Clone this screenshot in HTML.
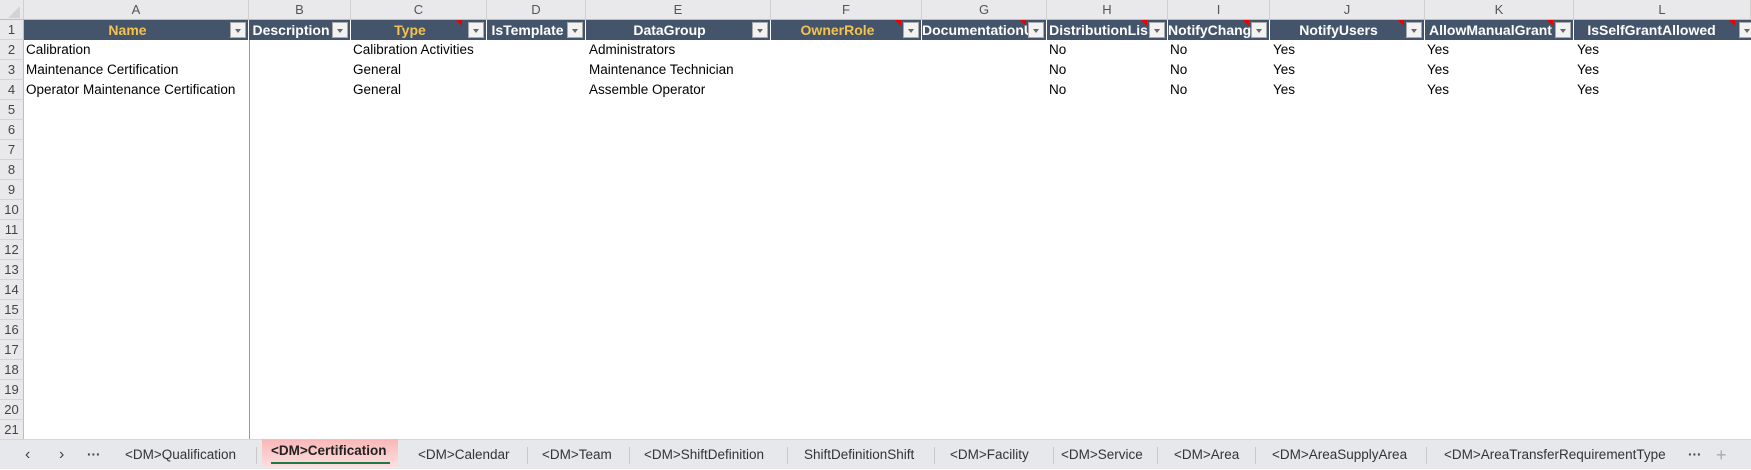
<!DOCTYPE html>
<html><head><meta charset="utf-8"><style>
*{margin:0;padding:0;box-sizing:border-box}
body{width:1751px;height:469px;overflow:hidden;background:#fff;font-family:"Liberation Sans",sans-serif;position:relative;font-size:13.5px;color:#000}
.a{position:absolute}
.ch{position:absolute;top:0;height:20px;background:#e9e9ec;border-right:1px solid #d0d0d0;border-bottom:1px solid #bdbdbd;text-align:center;line-height:20px;color:#555;font-size:13px}
.rh{position:absolute;left:0;width:24px;height:20px;background:#e9e9ec;border-bottom:1px solid #d4d4d4;border-right:1px solid #bdbdbd;text-align:center;line-height:20px;color:#444;font-size:13px}
.h{position:absolute;top:20px;height:20px;background:#44546a;border-right:1px solid #fff;color:#fff;font-weight:bold;line-height:20px;overflow:hidden;white-space:nowrap;font-size:14px}
.h span{display:block;text-align:center;padding-right:17px}
.y{color:#f5c24f}
.fb{position:absolute;right:2px;top:2px;width:16px;height:16px;background:#f2f2f2;border:1px solid #a9a9a9}
.fb:after{content:"";position:absolute;left:4px;top:6px;border-left:3.5px solid transparent;border-right:3.5px solid transparent;border-top:4px solid #666}
.rt{position:absolute;right:0;top:0;width:0;height:0;border-left:6px solid transparent;border-top:6px solid #e00}
.c{position:absolute;height:20px;line-height:20px;white-space:nowrap}
.tabs{position:absolute;left:0;top:439px;width:1751px;height:30px;background:#e6e8eb;border-top:1px solid #d6d6d6}
.t{position:absolute;top:0;height:30px;line-height:30px;color:#333;font-size:13.5px;white-space:nowrap}
.sep{position:absolute;top:7px;width:1px;height:17px;background:#c8c8c8}
</style></head><body>
<div class="ch" style="left:0;width:24px;background:#e9e9ec"></div>
<div class="a" style="left:8px;top:6px;border-left:12px solid transparent;border-bottom:12px solid #d3d3d6"></div>
<div class="ch" style="left:24px;width:225px">A</div>
<div class="ch" style="left:249px;width:102px">B</div>
<div class="ch" style="left:351px;width:136px">C</div>
<div class="ch" style="left:487px;width:99px">D</div>
<div class="ch" style="left:586px;width:185px">E</div>
<div class="ch" style="left:771px;width:151px">F</div>
<div class="ch" style="left:922px;width:125px">G</div>
<div class="ch" style="left:1047px;width:121px">H</div>
<div class="ch" style="left:1168px;width:102px">I</div>
<div class="ch" style="left:1270px;width:155px">J</div>
<div class="ch" style="left:1425px;width:149px">K</div>
<div class="ch" style="left:1574px;width:177px">L</div>

<div class="h" style="left:24px;width:225px"><span class="y">Name</span><i class="fb"></i></div>
<div class="h" style="left:249px;width:102px"><span>Description</span><i class="fb"></i></div>
<div class="h" style="left:351px;width:136px"><span class="y">Type</span><i class="rt" style="right:24px"></i><i class="fb"></i></div>
<div class="h" style="left:487px;width:99px"><span>IsTemplate</span><i class="fb"></i></div>
<div class="h" style="left:586px;width:185px"><span>DataGroup</span><i class="fb"></i></div>
<div class="h" style="left:771px;width:151px"><span class="y">OwnerRole</span><i class="rt" style="right:20px"></i><i class="fb"></i></div>
<div class="h" style="left:922px;width:125px"><span>DocumentationU</span><i class="rt" style="right:20px"></i><i class="fb"></i></div>
<div class="h" style="left:1047px;width:121px"><span>DistributionLis</span><i class="rt" style="right:20px"></i><i class="fb"></i></div>
<div class="h" style="left:1168px;width:102px"><span>NotifyChange</span><i class="rt" style="right:20px"></i><i class="fb"></i></div>
<div class="h" style="left:1270px;width:155px"><span>NotifyUsers</span><i class="rt" style="right:20px"></i><i class="fb"></i></div>
<div class="h" style="left:1425px;width:149px"><span>AllowManualGrant</span><i class="rt" style="right:20px"></i><i class="fb"></i></div>
<div class="h" style="left:1574px;width:177px;border-right:none"><span style="padding-right:22px">IsSelfGrantAllowed</span><i class="rt" style="right:16px"></i><i class="fb" style="right:-4px"></i></div>

<div class="rh" style="top:20px">1</div><div class="rh" style="top:40px">2</div><div class="rh" style="top:60px">3</div><div class="rh" style="top:80px">4</div><div class="rh" style="top:100px">5</div><div class="rh" style="top:120px">6</div><div class="rh" style="top:140px">7</div><div class="rh" style="top:160px">8</div><div class="rh" style="top:180px">9</div><div class="rh" style="top:200px">10</div><div class="rh" style="top:220px">11</div><div class="rh" style="top:240px">12</div><div class="rh" style="top:260px">13</div><div class="rh" style="top:280px">14</div><div class="rh" style="top:300px">15</div><div class="rh" style="top:320px">16</div><div class="rh" style="top:340px">17</div><div class="rh" style="top:360px">18</div><div class="rh" style="top:380px">19</div><div class="rh" style="top:400px">20</div><div class="rh" style="top:420px">21</div>

<div class="a" style="left:249px;top:40px;width:1px;height:400px;background:#9a9a9a"></div>

<div class="c" style="left:26px;top:40px">Calibration</div>
<div class="c" style="left:26px;top:60px">Maintenance Certification</div>
<div class="c" style="left:26px;top:80px">Operator Maintenance Certification</div>
<div class="c" style="left:353px;top:40px">Calibration Activities</div>
<div class="c" style="left:353px;top:60px">General</div>
<div class="c" style="left:353px;top:80px">General</div>
<div class="c" style="left:589px;top:40px">Administrators</div>
<div class="c" style="left:589px;top:60px">Maintenance Technician</div>
<div class="c" style="left:589px;top:80px">Assemble Operator</div>
<div class="c" style="left:1049px;top:40px">No</div><div class="c" style="left:1049px;top:60px">No</div><div class="c" style="left:1049px;top:80px">No</div>
<div class="c" style="left:1170px;top:40px">No</div><div class="c" style="left:1170px;top:60px">No</div><div class="c" style="left:1170px;top:80px">No</div>
<div class="c" style="left:1273px;top:40px">Yes</div><div class="c" style="left:1273px;top:60px">Yes</div><div class="c" style="left:1273px;top:80px">Yes</div>
<div class="c" style="left:1427px;top:40px">Yes</div><div class="c" style="left:1427px;top:60px">Yes</div><div class="c" style="left:1427px;top:80px">Yes</div>
<div class="c" style="left:1577px;top:40px">Yes</div><div class="c" style="left:1577px;top:60px">Yes</div><div class="c" style="left:1577px;top:80px">Yes</div>

<div class="tabs">
<div class="t" style="left:25px;font-size:16px;color:#444">‹</div>
<div class="t" style="left:59px;font-size:16px;color:#444">›</div>
<div class="t" style="left:87px;font-weight:bold;color:#444">···</div>
<div class="t" style="left:125px">&lt;DM&gt;Qualification</div>
<div class="sep" style="left:256px"></div>
<div class="a" style="left:262px;top:-1px;width:136px;height:29px;background:linear-gradient(#f9b6b6,#fde0e0);border-radius:0 0 4px 4px"></div>
<div class="t" style="left:271px;top:-4px;font-weight:bold;color:#222">&lt;DM&gt;Certification</div>
<div class="a" style="left:271px;top:22px;width:119px;height:2px;background:#1e7b45"></div>
<div class="t" style="left:418px">&lt;DM&gt;Calendar</div>
<div class="sep" style="left:527px"></div>
<div class="t" style="left:542px">&lt;DM&gt;Team</div>
<div class="sep" style="left:629px"></div>
<div class="t" style="left:644px">&lt;DM&gt;ShiftDefinition</div>
<div class="sep" style="left:787px"></div>
<div class="t" style="left:804px">ShiftDefinitionShift</div>
<div class="sep" style="left:934px"></div>
<div class="t" style="left:950px">&lt;DM&gt;Facility</div>
<div class="sep" style="left:1053px"></div>
<div class="t" style="left:1061px">&lt;DM&gt;Service</div>
<div class="sep" style="left:1157px"></div>
<div class="t" style="left:1174px">&lt;DM&gt;Area</div>
<div class="sep" style="left:1255px"></div>
<div class="t" style="left:1272px">&lt;DM&gt;AreaSupplyArea</div>
<div class="sep" style="left:1426px"></div>
<div class="t" style="left:1444px">&lt;DM&gt;AreaTransferRequirementType</div>
<div class="t" style="left:1688px;font-weight:bold;color:#444">···</div>
<div class="t" style="left:1716px;font-size:18px;color:#aaa">+</div>
</div>
</body></html>
